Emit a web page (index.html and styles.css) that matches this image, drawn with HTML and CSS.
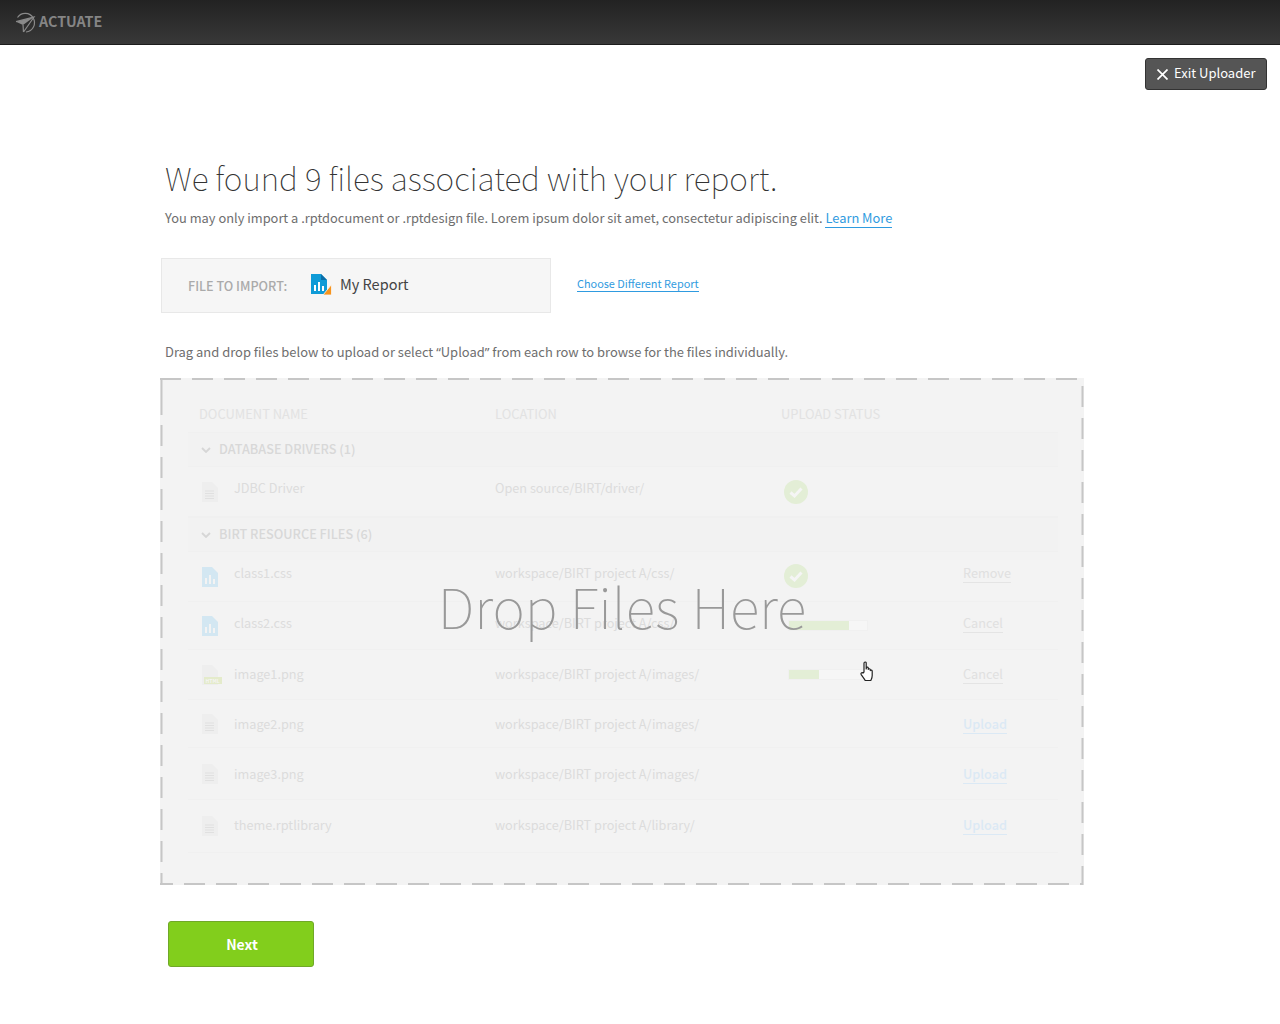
FILE: index.html
```html
<!DOCTYPE html>
<html lang="en">
<head>
  <meta charset="UTF-8">
  <title>Actuate Uploader</title>
  <link rel="stylesheet" href="styles.css">
</head>
<body>

  <!-- top bar -->
  <header class="topbar">
    <svg class="logo-mark" width="22" height="22" viewBox="0 0 22 22" fill="none" stroke="#8a8a8a" stroke-width="1.2">
      <path d="M2.5 6.5A9.3 9.3 0 1 1 11 21"/>
      <path d="M1 10.7L19 6L8.5 21"/>
      <path d="M1 10.7L19 6L8 14Z" fill="#8a8a8a" stroke="none"/>
      <path d="M8 14L8.5 21"/>
    </svg>
    <span class="logo-text">ACTUATE</span>
  </header>

  <div class="exit-row">
    <button class="exit-btn">
      <svg width="11" height="11" viewBox="0 0 11 11" stroke="#fff" stroke-width="1.7"><path d="M.5 .5L10.5 10.5M10.5 .5L.5 10.5"/></svg>
      <span class="exit-text">Exit Uploader</span>
    </button>
  </div>

  <main class="content">
    <h1 class="title">We found 9 files associated with your report.</h1>
    <p class="intro">You may only import a .rptdocument or .rptdesign file. Lorem ipsum dolor sit amet, consectetur adipiscing elit. <a class="link" href="#">Learn More</a></p>

    <div class="import-row">
      <div class="import-box">
        <span class="import-label">FILE TO IMPORT:</span>
        <svg class="import-icon" width="21" height="21" viewBox="0 0 21 21">
          <path d="M0 0H10L16 6V20H0Z" fill="#0f9bd7"/>
          <path d="M10 0L16 6H10Z" fill="#0b6ea8"/>
          <path d="M3 11h2v6H3zM7 8h2v9H7zM11 12h2v5h-2z" fill="#fff"/>
          <path d="M12 21L20.5 10.5V21Z" fill="#f7941d" stroke="#f6f6f6" stroke-width=".8"/>
        </svg>
        <span class="import-name">My Report</span>
      </div>
      <a class="link choose-link" href="#">Choose Different Report</a>
    </div>

    <p class="hint">Drag and drop files below to upload or select <span class="q">“</span>Upload<span class="q">”</span> from each row to browse for the files individually.</p>

    <section class="dropzone">
      <svg class="dashes" width="924" height="507" viewBox="0 0 924 507" fill="none" stroke="#c6c6c6" stroke-width="2">
        <path d="M0 1H923" stroke-dasharray="21 11"/>
        <path d="M1.5 0V37"/>
        <path d="M1.5 47V507" stroke-dasharray="21 11"/>
        <path d="M922.5 0V507" stroke-dasharray="21 11" stroke-dashoffset="24"/>
        <path d="M0 506H923" stroke-dasharray="21 11" stroke-dashoffset="8"/>
      </svg>

      <div class="file-table">
        <div class="head-row">
          <span>DOCUMENT NAME</span>
          <span>LOCATION</span>
          <span>UPLOAD STATUS</span>
        </div>

        <div class="group-row">
          <svg width="10" height="6" viewBox="0 0 10 6" fill="none" stroke="#d6d6d6" stroke-width="1.8"><path d="M1 1L5 5L9 1"/></svg>
          <span class="cell">DATABASE DRIVERS (1)</span>
        </div>
        <div class="file-row h50 lift8">
          <span class="ico"><svg width="16" height="20" viewBox="0 0 16 20"><path class="doc" d="M0 0H10L16 6V20H0Z"/><path class="lines" d="M3 9h9M3 11.5h9M3 14h9M3 16.5h9" /></svg></span>
          <span class="cell">JDBC Driver</span>
          <span class="cell">Open source/BIRT/driver/</span>
          <span class="status"><svg class="check" width="24" height="24" viewBox="0 0 24 24"><circle cx="12" cy="12" r="12"/><path d="M6.5 12.5L10.5 16L17.5 8.5"/></svg></span>
          <span></span>
        </div>

        <div class="group-row">
          <svg width="10" height="6" viewBox="0 0 10 6" fill="none" stroke="#d6d6d6" stroke-width="1.8"><path d="M1 1L5 5L9 1"/></svg>
          <span class="cell">BIRT RESOURCE FILES (6)</span>
        </div>
        <div class="file-row h50 lift8">
          <span class="ico"><svg width="16" height="20" viewBox="0 0 16 20"><path class="doc-blue" d="M0 0H10L16 6V20H0Z"/><path class="bars" d="M3 11h2v6H3zM7 8h2v9H7zM11 12h2v5h-2z"/></svg></span>
          <span class="cell">class1.css</span>
          <span class="cell">workspace/BIRT project A/css/</span>
          <span class="status status-up"><svg class="check" width="24" height="24" viewBox="0 0 24 24"><circle cx="12" cy="12" r="12"/><path d="M6.5 12.5L10.5 16L17.5 8.5"/></svg></span>
          <span class="cell"><a class="action" href="#">Remove</a></span>
        </div>
        <div class="file-row h48 lift6">
          <span class="ico"><svg width="16" height="20" viewBox="0 0 16 20"><path class="doc-blue" d="M0 0H10L16 6V20H0Z"/><path class="bars" d="M3 11h2v6H3zM7 8h2v9H7zM11 12h2v5h-2z"/></svg></span>
          <span class="cell">class2.css</span>
          <span class="cell">workspace/BIRT project A/css/</span>
          <span class="status"><span class="bar"><span class="bar-fill" style="width:77%"></span></span></span>
          <span class="cell"><a class="action" href="#">Cancel</a></span>
        </div>
        <div class="file-row h50 lift2">
          <span class="ico"><svg width="20" height="20" viewBox="0 0 20 20"><path class="doc" d="M0 0H10L16 6V20H0Z"/><rect class="tag" x="2" y="12" width="18" height="7"/><text class="tag-text" x="3.5" y="17.6">HTML</text></svg></span>
          <span class="cell">image1.png</span>
          <span class="cell">workspace/BIRT project A/images/</span>
          <span class="status"><span class="bar"><span class="bar-fill" style="width:39%"></span></span></span>
          <span class="cell"><a class="action" href="#">Cancel</a></span>
        </div>
        <div class="file-row h48">
          <span class="ico"><svg width="16" height="20" viewBox="0 0 16 20"><path class="doc" d="M0 0H10L16 6V20H0Z"/><path class="lines" d="M3 9h9M3 11.5h9M3 14h9M3 16.5h9"/></svg></span>
          <span class="cell">image2.png</span>
          <span class="cell">workspace/BIRT project A/images/</span>
          <span></span>
          <span class="cell"><a class="action upload" href="#">Upload</a></span>
        </div>
        <div class="file-row h52">
          <span class="ico"><svg width="16" height="20" viewBox="0 0 16 20"><path class="doc" d="M0 0H10L16 6V20H0Z"/><path class="lines" d="M3 9h9M3 11.5h9M3 14h9M3 16.5h9"/></svg></span>
          <span class="cell">image3.png</span>
          <span class="cell">workspace/BIRT project A/images/</span>
          <span></span>
          <span class="cell"><a class="action upload" href="#">Upload</a></span>
        </div>
        <div class="file-row h53 lift4">
          <span class="ico"><svg width="16" height="20" viewBox="0 0 16 20"><path class="doc" d="M0 0H10L16 6V20H0Z"/><path class="lines" d="M3 9h9M3 11.5h9M3 14h9M3 16.5h9"/></svg></span>
          <span class="cell">theme.rptlibrary</span>
          <span class="cell">workspace/BIRT project A/library/</span>
          <span></span>
          <span class="cell"><a class="action upload" href="#">Upload</a></span>
        </div>
      </div>

      <div class="drop-text">Drop Files Here</div>

      <svg class="hand" width="16" height="21" viewBox="0 0 16 21" fill="#fff" stroke="#222" stroke-width="1.2" stroke-linejoin="round">
        <path d="M5 11V2.2C5 .6 7.2 .6 7.2 2.2V8L7.4 6.8C7.8 5.8 9.3 6 9.3 7.2V8.4C9.6 7.4 11.2 7.6 11.3 8.8V9.6C11.7 8.8 13.2 9 13.2 10.2V14.5C13.2 17 12.4 18 11.8 19.5H6.2C5.4 17.6 3.6 15.8 2.2 13.6C1.4 12.2 2.9 11 4 12Z"/>
      </svg>
    </section>

    <button class="next-btn">Next</button>
  </main>

</body>
</html>
```

FILE: styles.css
```css
body {
  margin: 0;
  background: #fff;
  font-family: "Noto Sans CJK SC", "Noto Sans", sans-serif;
  color: #6e6e6e;
}

.topbar {
  height: 44px;
  display: flex;
  align-items: center;
  gap: 2px;
  padding-left: 15px;
  background: linear-gradient(to bottom, #222, #383838);
  border-bottom: 1px solid #1c1c1c;
}

.logo-text {
  padding-bottom: 3px;
  font-size: 14.3px;
  font-weight: 700;
  color: #858585;
}

.exit-row {
  display: flex;
  justify-content: flex-end;
  padding: 13px 13px 0 0;
}

.exit-btn {
  width: 122px;
  height: 32px;
  display: flex;
  align-items: center;
  gap: 6px;
  padding: 0 0 0 11px;
  background: #555;
  border: 1px solid #333;
  border-radius: 3px;
  color: #fff;
  font-family: inherit;
  font-size: 13px;
}

.exit-text {
  padding-bottom: 4px;
}

.content {
  padding: 63px 0 0 161px;
}

.title {
  margin: 0 0 0 4px;
  font-size: 31.7px;
  line-height: 48px;
  font-weight: 100;
  color: #333;
}

.intro {
  margin: 7px 0 0 4px;
  font-size: 12.85px;
  line-height: 20px;
}

.link {
  color: #2f9be0;
  text-decoration: none;
  border-bottom: 1px solid #2f9be0;
}

.import-row {
  display: flex;
  align-items: center;
  gap: 26px;
  margin-top: 30px;
}

.import-box {
  width: 388px;
  height: 53px;
  display: flex;
  align-items: center;
  background: #f6f6f6;
  border: 1px solid #e8e8e8;
}

.import-label {
  margin-left: 26px;
  width: 123px;
  font-size: 12.6px;
  font-weight: 500;
  color: #aaa;
}

.import-icon {
  margin-bottom: 2px;
}

.import-name {
  margin-left: 8px;
  padding-bottom: 4px;
  font-size: 14.5px;
  color: #444;
}

.choose-link {
  font-size: 10.9px;
  margin-top: -4px;
}

.hint {
  margin: 29px 0 0 4px;
  font-size: 12.95px;
  line-height: 20px;
}

.q {
  font-family: "Noto Sans", sans-serif;
}

.dropzone {
  position: relative;
  width: 924px;
  height: 507px;
  margin: 16px 0 0 -1px;
  background: #f3f3f3;
  box-sizing: border-box;
  padding: 25px 26px 0 28px;
  overflow: hidden;
}

.dashes {
  position: absolute;
  top: 0;
  left: 0;
}

.file-table {
  font-size: 12.7px;
  color: #dcdcdc;
}

.head-row,
.file-row {
  display: grid;
  grid-template-columns: 46px 261px 286px 182px 1fr;
}

.head-row {
  height: 29px;
  box-sizing: border-box;
  padding-bottom: 8px;
  grid-template-columns: 296px 286px 1fr;
  padding-left: 11px;
  align-items: center;
  font-size: 12.9px;
  color: #e2e2e2;
}

.group-row {
  height: 35px;
  display: flex;
  align-items: center;
  gap: 8px;
  padding-left: 13px;
  background: #f2f2f2;
  border-top: 1px solid #f0f0f0;
  border-bottom: 1px solid #f0f0f0;
  box-sizing: border-box;
  font-weight: 500;
  color: #d8d8d8;
}

.group-row .cell {
  padding-bottom: 3px;
}

.file-row {
  align-items: center;
  box-sizing: border-box;
  border-bottom: 1px solid #f0f0f0;
}

.h48 { height: 48px; }
.h50 { height: 50px; }
.h52 { height: 52px; }
.h53 { height: 53px; }

.lift2 .cell { padding-bottom: 2px; }
.lift4 .cell { padding-bottom: 4px; }
.lift6 .cell { padding-bottom: 6px; }
.lift8 .cell { padding-bottom: 8px; }

.ico {
  padding-left: 14px;
  display: flex;
}

.doc { fill: #eeeeee; }
.doc-blue { fill: #d3e7f2; }
.lines { stroke: #e0e0e0; fill: none; }
.bars { fill: #f3f3f3; }
.tag { fill: #e4ebcb; }

.tag-text {
  font-size: 5px;
  font-weight: 700;
  fill: #f5f5f5;
}

.status {
  display: flex;
  padding-left: 3px;
}

.status-up {
  padding-bottom: 2px;
}

.check circle { fill: #e3eed6; }
.check path {
  fill: none;
  stroke: #f5f5f5;
  stroke-width: 3;
}

.bar {
  width: 80px;
  height: 11px;
  margin-left: 4px;
  box-sizing: border-box;
  background: #f6f6f6;
  border: 1px solid #f0f0f0;
  display: block;
}

.bar-fill {
  display: block;
  height: 100%;
  background: #e3eed6;
}

.action {
  color: #e0e0e0;
  text-decoration: none;
  border-bottom: 1px solid #e4e4e4;
}

.upload {
  font-weight: 500;
  color: #dbe9f5;
  border-bottom-color: #dbe9f5;
}

.drop-text {
  position: absolute;
  top: 190px;
  left: 0;
  right: 0;
  text-align: center;
  font-size: 55.2px;
  line-height: 74px;
  font-weight: 100;
  color: #999;
}

.hand {
  position: absolute;
  left: 699px;
  top: 283px;
}

.next-btn {
  display: block;
  width: 146px;
  height: 46px;
  margin: 36px 0 0 7px;
  padding-left: 8px;
  background: #82ce1c;
  border: 1px solid #70a828;
  border-radius: 3px;
  color: #fff;
  font-family: inherit;
  font-size: 14px;
  font-weight: 700;
}
```
